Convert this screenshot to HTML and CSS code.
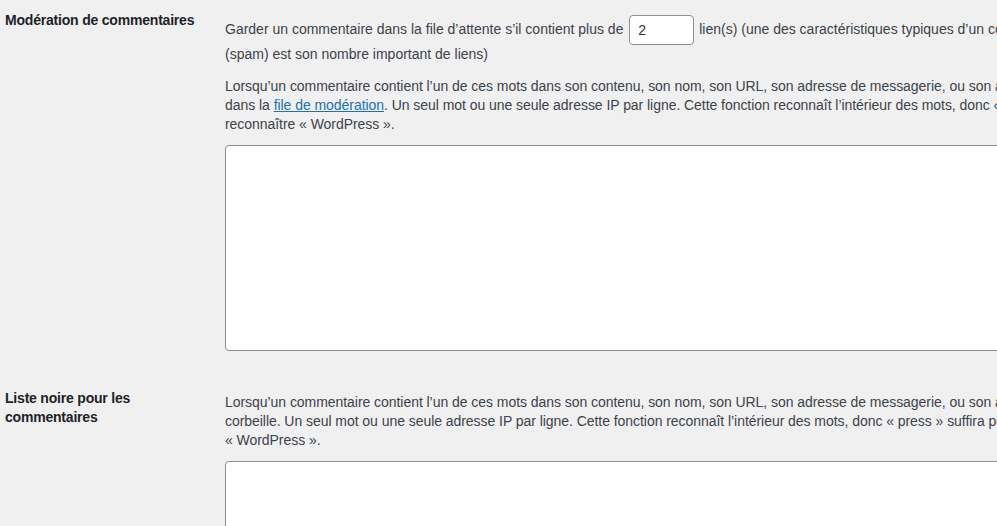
FILE: index.html
```html
<!DOCTYPE html>
<html lang="fr">
<head>
    <meta charset="UTF-8">
    <meta name="viewport" content="width=device-width, initial-scale=1.0">
    <title>Réglages des commentaires</title>
    <link rel="stylesheet" href="styles.css">
</head>
<body>
    <div class="settings">
        <div class="setting-row">
            <div class="setting-label">Modération de commentaires</div>
            <div class="setting-field">
                <p class="line-with-input">
                    Garder un commentaire dans la file d’attente s’il contient plus de
                    <input type="text" class="small-text" value="2">
                    lien(s) (une des caractéristiques typiques d’un commentaire indésirable<br>
                    (spam) est son nombre important de liens)
                </p>
                <p class="description">
                    Lorsqu’un commentaire contient l’un de ces mots dans son contenu, son nom, son URL, son adresse de messagerie, ou son adresse IP, il sera placé<br>
                    dans la <a href="#">file de modération</a>. Un seul mot ou une seule adresse IP par ligne. Cette fonction reconnaît l’intérieur des mots, donc « press » suffira pour<br>
                    reconnaître « WordPress ».
                </p>
                <textarea class="large-text"></textarea>
            </div>
        </div>

        <div class="setting-row">
            <div class="setting-label">Liste noire pour les commentaires</div>
            <div class="setting-field">
                <p class="description">
                    Lorsqu’un commentaire contient l’un de ces mots dans son contenu, son nom, son URL, son adresse de messagerie, ou son adresse IP, il sera placé dans la<br>
                    corbeille. Un seul mot ou une seule adresse IP par ligne. Cette fonction reconnaît l’intérieur des mots, donc « press » suffira pour reconnaître<br>
                    « WordPress ».
                </p>
                <textarea class="large-text"></textarea>
            </div>
        </div>
    </div>
</body>
</html>
```

FILE: styles.css
```css
body {
    margin: 0;
    background-color: #f0f0f1;
    color: #3c434a;
    font-family: 'Liberation Sans', Arial, sans-serif;
    font-size: 14px;
    line-height: 19px;
    overflow: hidden;
}

.settings {
    padding: 11px 0 0 5px;
}

.setting-row {
    display: flex;
    align-items: flex-start;
    margin-bottom: 38px;
}

.setting-label {
    flex: 0 0 200px;
    margin-right: 20px;
    font-weight: 600;
    color: #1d2327;
    letter-spacing: -0.2px;
}

.setting-field {
    flex: 0 0 1100px;
    padding-top: 4px;
}

.setting-field p {
    margin: 0 0 13px;
    white-space: nowrap;
}

.setting-field p.description {
    margin-bottom: 11px;
    letter-spacing: -0.05px;
}

.small-text {
    width: 65px;
    height: 30px;
    box-sizing: border-box;
    padding: 0 8px;
    margin: 0 1px 0 2px;
    border: 1px solid #8c8f94;
    border-radius: 4px;
    background-color: #fff;
    color: #2c3338;
    font-family: inherit;
    font-size: 14px;
    vertical-align: middle;
}

a {
    color: #2271b1;
    text-decoration: underline;
}

.large-text {
    display: block;
    width: 1000px;
    height: 206px;
    box-sizing: border-box;
    border: 1px solid #8c8f94;
    border-radius: 4px;
    background-color: #fff;
    resize: vertical;
}
```
